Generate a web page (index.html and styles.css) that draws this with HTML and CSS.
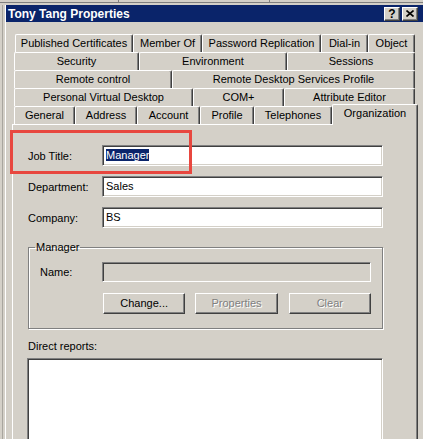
FILE: index.html
```html
<!DOCTYPE html>
<html lang="en">
<head>
<meta charset="UTF-8">
<title>Tony Tang Properties</title>
<link rel="stylesheet" href="styles.css">
</head>
<body>
<div class="backdrop"></div>
<div class="window">
  <div class="frame">

    <div class="titlebar">
      <span class="title">Tony Tang Properties</span>
      <div class="caption-btns">
        <span class="cap-btn">?</span>
        <span class="cap-btn">
          <svg width="8" height="7" viewBox="0 0 8 7"><path d="M0.5 0.5 L7.5 6.5 M7.5 0.5 L0.5 6.5" stroke="#000" stroke-width="1.6" fill="none"/></svg>
        </span>
      </div>
    </div>

    <div class="tabs">
      <div class="tab-row row-1">
        <span class="tab">Published Certificates</span>
        <span class="tab">Member Of</span>
        <span class="tab">Password Replication</span>
        <span class="tab">Dial-in</span>
        <span class="tab">Object</span>
      </div>
      <div class="tab-row row-2">
        <span class="tab">Security</span>
        <span class="tab">Environment</span>
        <span class="tab">Sessions</span>
      </div>
      <div class="tab-row row-3">
        <span class="tab">Remote control</span>
        <span class="tab">Remote Desktop Services Profile</span>
      </div>
      <div class="tab-row row-4">
        <span class="tab">Personal Virtual Desktop</span>
        <span class="tab">COM+</span>
        <span class="tab">Attribute Editor</span>
      </div>
      <div class="tab-row row-5">
        <span class="tab">General</span>
        <span class="tab">Address</span>
        <span class="tab">Account</span>
        <span class="tab">Profile</span>
        <span class="tab">Telephones</span>
        <span class="tab tab-active">Organization</span>
      </div>
    </div>

    <div class="panel">
      <div class="field">
        <label class="field-label">Job Title:</label>
        <div class="textbox"><span class="selected">Manager</span></div>
      </div>
      <div class="field">
        <label class="field-label">Department:</label>
        <div class="textbox">Sales</div>
      </div>
      <div class="field">
        <label class="field-label">Company:</label>
        <div class="textbox">BS</div>
      </div>

      <fieldset class="group">
        <legend>Manager</legend>
        <div class="field field-name">
          <label class="field-label">Name:</label>
          <div class="textbox textbox-disabled"></div>
        </div>
        <div class="btn-row">
          <span class="btn">Change...</span>
          <span class="btn btn-disabled">Properties</span>
          <span class="btn btn-disabled">Clear</span>
        </div>
      </fieldset>

      <div class="reports-label">Direct reports:</div>
      <div class="listbox"></div>
    </div>

  </div>
</div>

<!-- annotation drawn over the dialog -->
<div class="callout"></div>
</body>
</html>
```

FILE: styles.css
```css
:root {
  --face: #d4d0c8;
  --shadow: #808080;
  --dark: #404040;
  --light: #ffffff;
  --navy: #0a246a;
  --text: #000000;
  --callout: #e8473f;
}

* { box-sizing: border-box; }

body {
  margin: 0;
  background: var(--face);
  color: var(--text);
  font-family: 'Liberation Sans', Arial, sans-serif;
  font-size: 11px;
  width: 423px;
  height: 439px;
  overflow: hidden;
  position: relative;
}

/* window behind the dialog */
.backdrop {
  height: 5px;
  background:
    linear-gradient(var(--shadow), var(--shadow)) 0 2px / 100% 1px no-repeat,
    linear-gradient(var(--shadow), var(--shadow)) 118px 0 / 1px 2px no-repeat,
    linear-gradient(var(--shadow), var(--shadow)) 269px 0 / 1px 2px no-repeat,
    var(--face);
}

.window {
  margin-left: 2px;
  border-left: 1px solid #a8a59e;
}

.frame {
  margin-left: 2px;
  border-left: 1px solid var(--light);
  height: 434px;
}

/* Title bar */
.titlebar {
  height: 17px;
  background: var(--navy);
  display: flex;
  align-items: center;
  justify-content: space-between;
  padding: 0 5px 0 2px;
}

.title {
  color: #fff;
  font-weight: bold;
  font-size: 12px;
}

.caption-btns {
  display: flex;
  gap: 2px;
}

.cap-btn {
  width: 16px;
  height: 14px;
  background: var(--face);
  border-top: 1px solid var(--light);
  border-left: 1px solid var(--light);
  border-right: 1px solid var(--dark);
  border-bottom: 1px solid var(--dark);
  box-shadow: inset -1px -1px 0 var(--shadow);
  display: flex;
  align-items: center;
  justify-content: center;
  font-weight: bold;
  font-size: 12px;
  line-height: 1;
}

/* Tabs */
.tabs {
  margin: 12px 0 0 8px;
  width: 402px;
}

.tab-row {
  display: grid;
  height: 18px;
}

.row-1 { grid-template-columns: 118px 69px 119px 47px 47px; margin-left: 1px; }
.row-2 { grid-template-columns: 125px 148px 128px; }
.row-3 { grid-template-columns: 158px 243px; }
.row-4 { grid-template-columns: 179px 91px 131px; }
.row-5 { grid-template-columns: 61px 62px 63px 54px 78px 84px; align-items: end; }

.tab {
  height: 18px;
  background: var(--face);
  border-top: 1px solid var(--light);
  border-left: 1px solid var(--light);
  border-right: 1px solid var(--dark);
  border-radius: 2px 2px 0 0;
  box-shadow: inset -1px 0 0 var(--shadow);
  text-align: center;
  line-height: 17px;
  white-space: nowrap;
}

.tab-active {
  position: relative;
  z-index: 1;
  height: 21px;
  margin: -2px -2px -1px 0;
  line-height: 16px;
}

/* Tab page */
.panel {
  margin-left: 6px;
  width: 406px;
  height: 315px;
  border-top: 1px solid var(--light);
  border-left: 1px solid var(--light);
  border-right: 1px solid var(--dark);
  box-shadow: inset -1px 0 0 var(--shadow);
  padding: 20px 0 0 15px;
  overflow: hidden;
}

.field {
  display: flex;
  align-items: center;
  height: 21px;
  margin-bottom: 10px;
}

.field-label {
  width: 74px;
  flex-shrink: 0;
}

.textbox {
  width: 281px;
  height: 21px;
  background: #fff;
  border-top: 1px solid var(--shadow);
  border-left: 1px solid var(--shadow);
  border-right: 1px solid var(--light);
  border-bottom: 1px solid var(--light);
  box-shadow: inset 1px 1px 0 var(--dark), inset -1px -1px 0 var(--face);
  padding: 0 3px;
  line-height: 19px;
  white-space: nowrap;
}

.selected {
  background: var(--navy);
  color: #fff;
}

/* Manager group */
.group {
  margin: 13px 0 0;
  width: 355px;
  padding: 8px 11px 14px;
  border: 1px solid var(--shadow);
  box-shadow: 1px 1px 0 var(--light), inset 1px 1px 0 var(--light);
  min-inline-size: 0;
}

.group legend {
  margin-left: -5px;
  padding: 0 1px;
  line-height: 13px;
}

.field-name {
  height: 20px;
  margin-bottom: 11px;
}

.field-name .field-label { width: 62px; }

.textbox-disabled {
  width: 269px;
  height: 20px;
  background: var(--face);
}

.btn-row {
  display: flex;
  margin-left: 63px;
}

.btn {
  width: 83px;
  height: 21px;
  background: var(--face);
  border-top: 1px solid var(--light);
  border-left: 1px solid var(--light);
  border-right: 1px solid var(--dark);
  border-bottom: 1px solid var(--dark);
  box-shadow: inset -1px -1px 0 var(--shadow);
  text-align: center;
  line-height: 19px;
}

.btn + .btn { margin-left: 10px; }
.btn:last-child { margin-left: 11px; }

.btn-disabled {
  color: var(--shadow);
  text-shadow: 1px 1px 0 var(--light);
}

/* Direct reports */
.reports-label {
  margin-top: 11px;
  line-height: 13px;
}

.listbox {
  margin: 5px 0 0 -1px;
  width: 356px;
  height: 100px;
  background: #fff;
  border-top: 1px solid var(--shadow);
  border-left: 1px solid var(--shadow);
  border-right: 1px solid var(--light);
  box-shadow: inset 1px 1px 0 var(--dark), inset -1px 0 0 var(--face);
}

/* red annotation box */
.callout {
  position: absolute;
  left: 10px;
  top: 130px;
  width: 182px;
  height: 44px;
  border: 3px solid var(--callout);
}
```
